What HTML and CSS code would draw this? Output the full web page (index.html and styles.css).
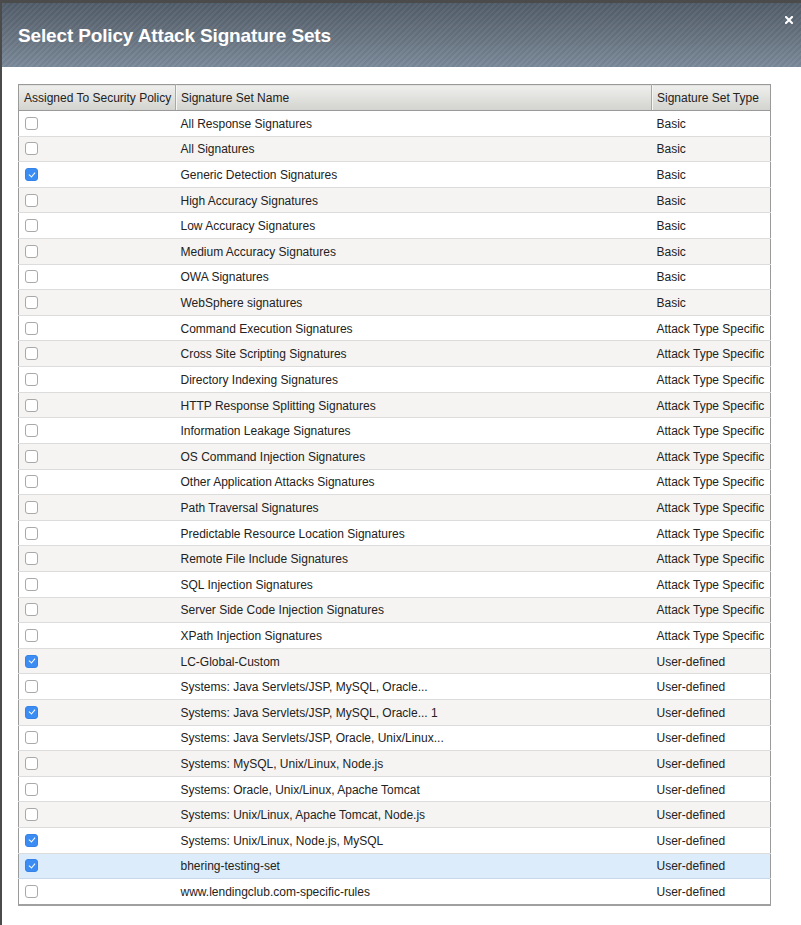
FILE: index.html
```html
<!DOCTYPE html>
<html>
<head>
<meta charset="utf-8">
<link rel="stylesheet" href="styles.css">
</head>
<body>
<div class="overlay">
  <div class="dialog">
    <div class="dlg-head">
      <h1 class="dlg-title">Select Policy Attack Signature Sets</h1>
      <svg class="dlg-close" width="8" height="8" viewBox="0 0 8 8" aria-label="close"><path d="M1 1 L7 7 M7 1 L1 7" stroke="#fff" stroke-width="2.1" stroke-linecap="square"/></svg>
    </div>
    <div class="dlg-body">
      <table class="sets">
        <colgroup><col class="c1"><col class="c2"><col class="c3"></colgroup>
        <thead>
          <tr><th>Assigned To Security Policy</th><th>Signature Set Name</th><th>Signature Set Type</th></tr>
        </thead>
        <tbody>
          <tr><td><span class="cb"></span></td><td>All Response Signatures</td><td>Basic</td></tr>
          <tr><td><span class="cb"></span></td><td>All Signatures</td><td>Basic</td></tr>
          <tr><td><span class="cb on"></span></td><td>Generic Detection Signatures</td><td>Basic</td></tr>
          <tr><td><span class="cb"></span></td><td>High Accuracy Signatures</td><td>Basic</td></tr>
          <tr><td><span class="cb"></span></td><td>Low Accuracy Signatures</td><td>Basic</td></tr>
          <tr><td><span class="cb"></span></td><td>Medium Accuracy Signatures</td><td>Basic</td></tr>
          <tr><td><span class="cb"></span></td><td>OWA Signatures</td><td>Basic</td></tr>
          <tr><td><span class="cb"></span></td><td>WebSphere signatures</td><td>Basic</td></tr>
          <tr><td><span class="cb"></span></td><td>Command Execution Signatures</td><td>Attack Type Specific</td></tr>
          <tr><td><span class="cb"></span></td><td>Cross Site Scripting Signatures</td><td>Attack Type Specific</td></tr>
          <tr><td><span class="cb"></span></td><td>Directory Indexing Signatures</td><td>Attack Type Specific</td></tr>
          <tr><td><span class="cb"></span></td><td>HTTP Response Splitting Signatures</td><td>Attack Type Specific</td></tr>
          <tr><td><span class="cb"></span></td><td>Information Leakage Signatures</td><td>Attack Type Specific</td></tr>
          <tr><td><span class="cb"></span></td><td>OS Command Injection Signatures</td><td>Attack Type Specific</td></tr>
          <tr><td><span class="cb"></span></td><td>Other Application Attacks Signatures</td><td>Attack Type Specific</td></tr>
          <tr><td><span class="cb"></span></td><td>Path Traversal Signatures</td><td>Attack Type Specific</td></tr>
          <tr><td><span class="cb"></span></td><td>Predictable Resource Location Signatures</td><td>Attack Type Specific</td></tr>
          <tr><td><span class="cb"></span></td><td>Remote File Include Signatures</td><td>Attack Type Specific</td></tr>
          <tr><td><span class="cb"></span></td><td>SQL Injection Signatures</td><td>Attack Type Specific</td></tr>
          <tr><td><span class="cb"></span></td><td>Server Side Code Injection Signatures</td><td>Attack Type Specific</td></tr>
          <tr><td><span class="cb"></span></td><td>XPath Injection Signatures</td><td>Attack Type Specific</td></tr>
          <tr><td><span class="cb on"></span></td><td>LC-Global-Custom</td><td>User-defined</td></tr>
          <tr><td><span class="cb"></span></td><td>Systems: Java Servlets/JSP, MySQL, Oracle...</td><td>User-defined</td></tr>
          <tr><td><span class="cb on"></span></td><td>Systems: Java Servlets/JSP, MySQL, Oracle... 1</td><td>User-defined</td></tr>
          <tr><td><span class="cb"></span></td><td>Systems: Java Servlets/JSP, Oracle, Unix/Linux...</td><td>User-defined</td></tr>
          <tr><td><span class="cb"></span></td><td>Systems: MySQL, Unix/Linux, Node.js</td><td>User-defined</td></tr>
          <tr><td><span class="cb"></span></td><td>Systems: Oracle, Unix/Linux, Apache Tomcat</td><td>User-defined</td></tr>
          <tr><td><span class="cb"></span></td><td>Systems: Unix/Linux, Apache Tomcat, Node.js</td><td>User-defined</td></tr>
          <tr><td><span class="cb on"></span></td><td>Systems: Unix/Linux, Node.js, MySQL</td><td>User-defined</td></tr>
          <tr class="sel"><td><span class="cb on"></span></td><td>bhering-testing-set</td><td>User-defined</td></tr>
          <tr><td><span class="cb"></span></td><td>www.lendingclub.com-specific-rules</td><td>User-defined</td></tr>
        </tbody>
      </table>
    </div>
  </div>
</div>
</body>
</html>
```

FILE: styles.css
```css
html, body {
  margin: 0;
  padding: 0;
  height: 100%;
  overflow: hidden;
}
body {
  background: #4b4b4b;
  font-family: "Liberation Sans", Arial, sans-serif;
}
.overlay {
  padding: 3px 0 0 2px;
  height: 100%;
  box-sizing: border-box;
}
.dialog {
  background: #fff;
  height: 100%;
}
.dlg-head {
  height: 64px;
  display: flex;
  align-items: center;
  padding-left: 16px;
  position: relative;
  background:
    repeating-linear-gradient(-45deg, rgba(255,255,255,0.035) 0 2px, rgba(0,0,0,0.035) 2px 4px),
    linear-gradient(to bottom, #525d6b 0%, #67737f 50%, #7b8a9a 100%);
}
.dlg-title {
  margin: 0;
  color: #fff;
  font-size: 19px;
  font-weight: bold;
  letter-spacing: -0.15px;
  padding-top: 2px;
}
.dlg-close {
  position: absolute;
  right: 8px;
  top: 13px;
}
.dlg-body {
  padding: 17px 0 0 16px;
}
.sets {
  border-collapse: collapse;
  width: 752px;
  table-layout: fixed;
  font-size: 12px;
  color: #222;
  border: 1px solid #9a9a9a;
  border-bottom: 2px solid #a0a0a0;
}
.sets col.c1 { width: 157px; }
.sets col.c2 { width: 476px; }
.sets col.c3 { width: 119px; }
.sets th {
  height: 25px;
  padding: 0 5px;
  text-align: left;
  font-weight: normal;
  color: #222;
  white-space: nowrap;
  background: linear-gradient(to bottom, #efefed 0%, #dededb 60%, #d2d2ce 100%);
  border-left: 1px solid #a8a8a8;
  box-shadow: inset 1px 0 0 #f6f6f4;
  border-bottom: 1px solid #9a9a9a;
}
.sets th:first-child { border-left: none; box-shadow: none; }
.sets td {
  height: 23.62px;
  padding: 1px 5px 0;
  white-space: nowrap;
  border-bottom: 1px solid #dcdcdc;
}
.sets tbody tr:nth-child(even) td { background: #f5f4f2; }
.sets tbody tr.sel td { background: #dcecfb; border-bottom-color: #c8d8e8; }
.sets tbody tr:last-child td { border-bottom: none; }
.sets td:first-child { padding-left: 6px; }
.cb {
  display: block;
  width: 11px;
  height: 11px;
  border: 1px solid #a9a9a9;
  border-radius: 3px;
  background: #fff;
  position: relative;
  margin-top: -1px;
}
.cb.on {
  background: #3b8df3;
  border-color: #3683e8;
}
.cb.on::after {
  content: "";
  position: absolute;
  left: 3.5px;
  top: 1.5px;
  width: 3px;
  height: 5px;
  border: solid #fff;
  border-width: 0 1.6px 1.6px 0;
  transform: rotate(40deg);
}
```
